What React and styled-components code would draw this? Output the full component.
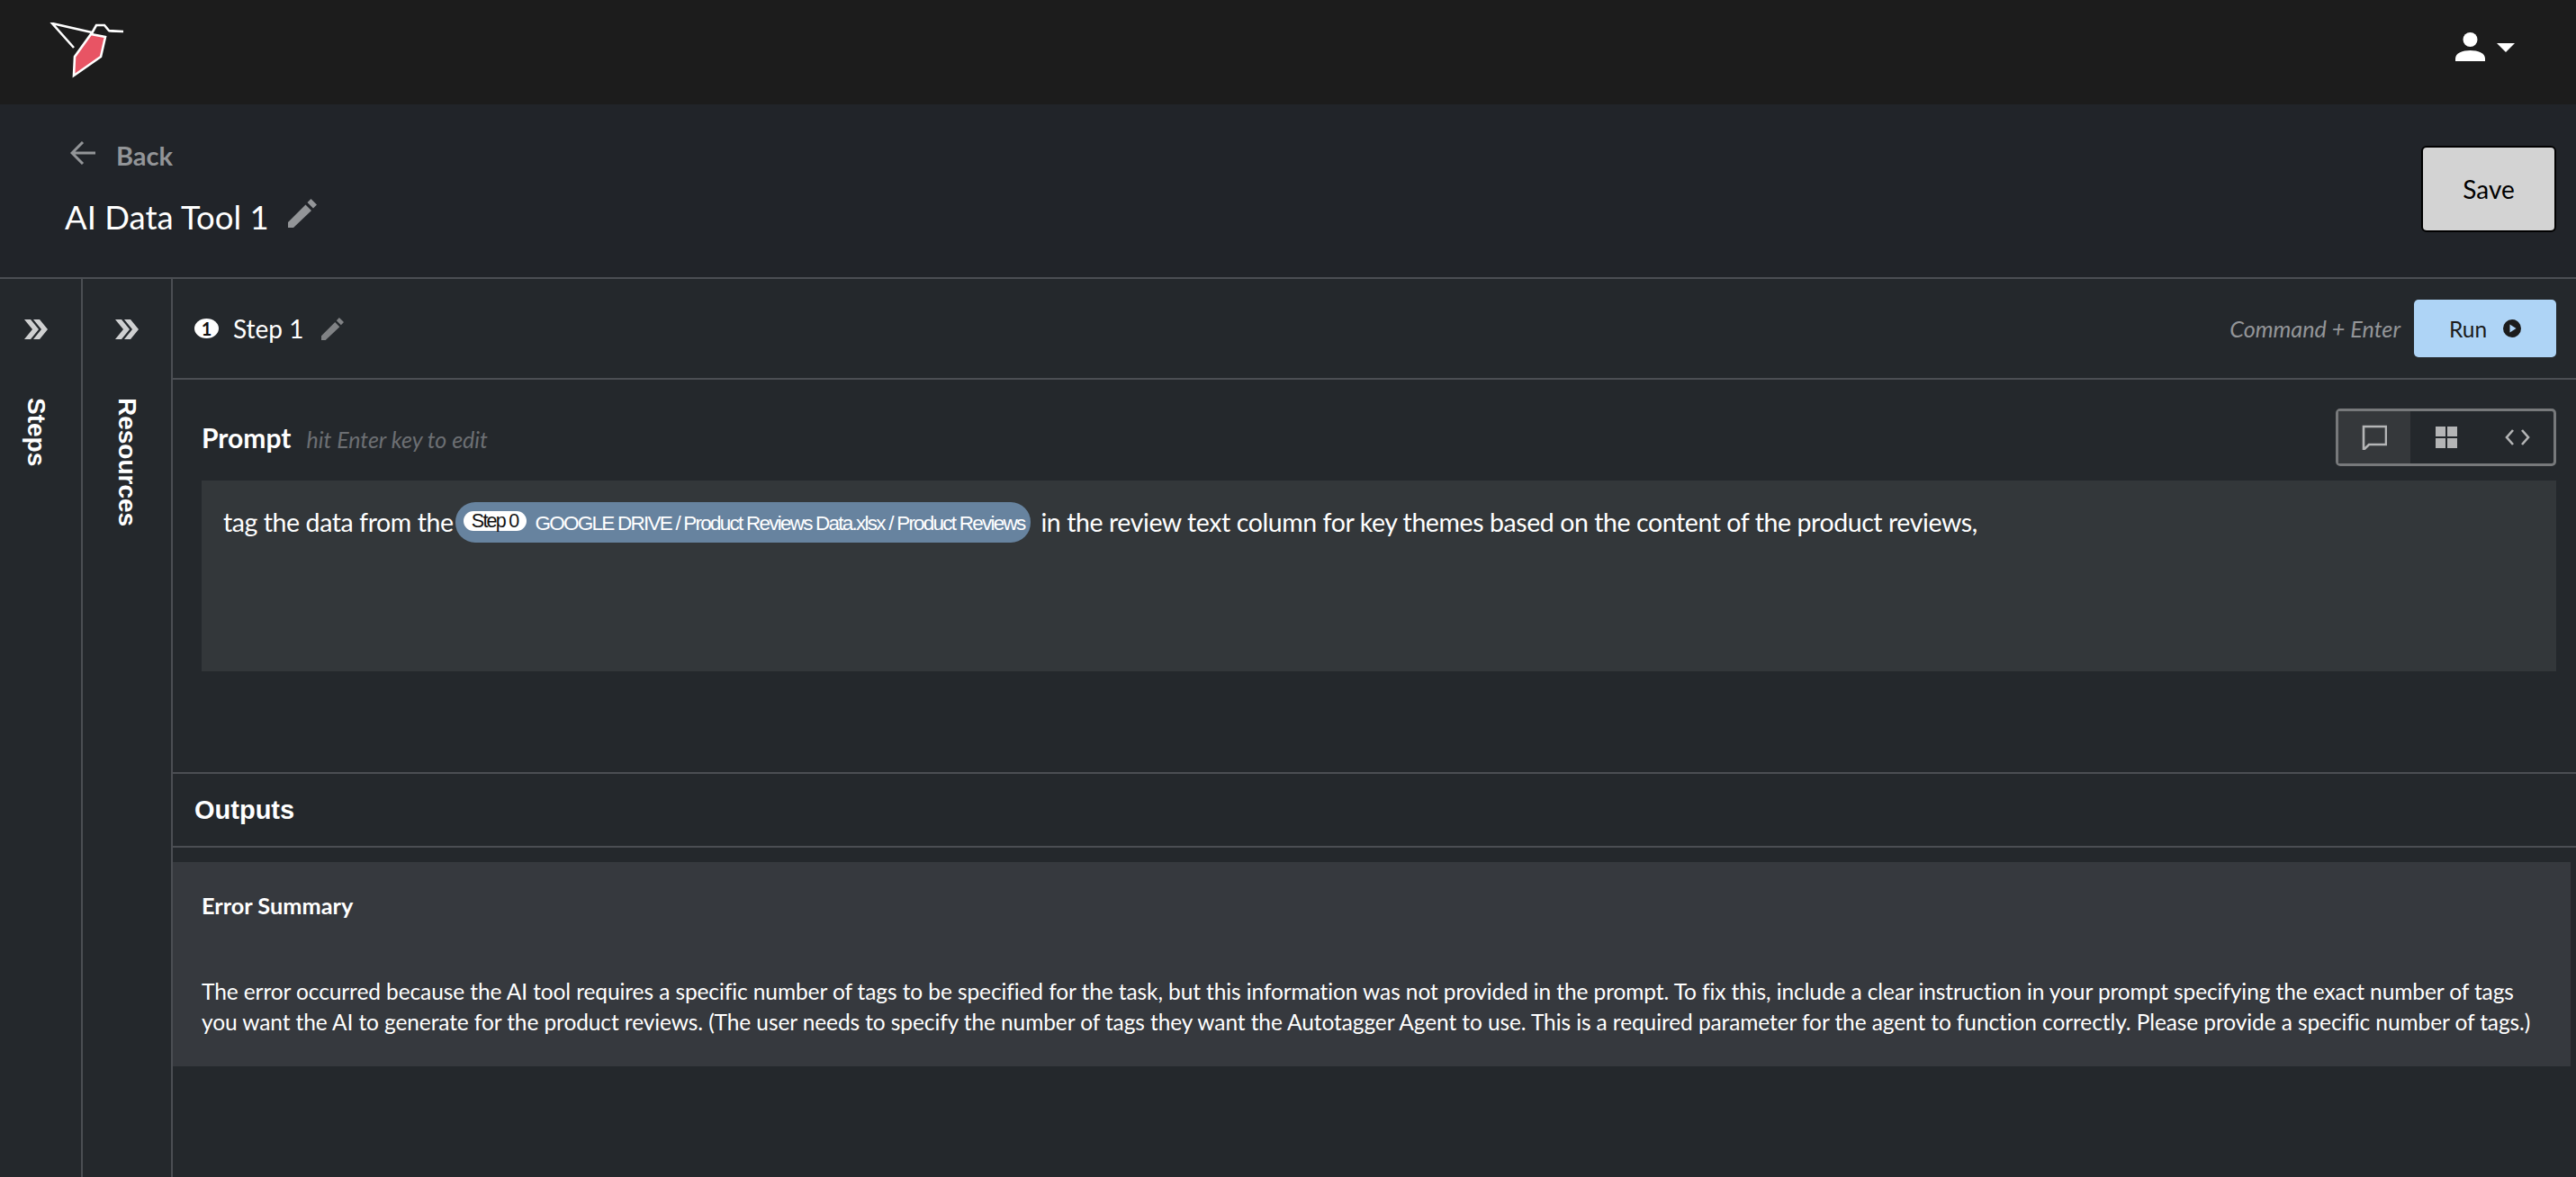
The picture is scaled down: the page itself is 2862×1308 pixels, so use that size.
import React from "react";
import styled, { createGlobalStyle } from "styled-components";

const Global = createGlobalStyle`
  html, body { margin: 0; padding: 0; background: #24282c; }
  body { font-family: Lato, "Liberation Sans", sans-serif; color: #fff; }
  * { box-sizing: border-box; }
`;
const Page = styled.div`width: 2862px; height: 1308px; overflow: hidden; display: flex; flex-direction: column;`;
const TopBar = styled.header`height: 116px; flex: none; background: #1c1c1c; display: flex; align-items: flex-start; justify-content: space-between; padding: 25px 68px 0 55px;`;
const UserMenu = styled.div`display: flex; align-items: center; gap: 13px; margin-top: 11px;`;
const Caret = styled.span`width: 0; height: 0; border-left: 10px solid transparent; border-right: 10px solid transparent; border-top: 10px solid #fff; margin-top: 2px;`;
const TitleBar = styled.section`height: 194px; flex: none; background: #212429; border-bottom: 2px solid #4b4e53; display: flex; justify-content: space-between; padding: 33px 22px 0 72px;`;
const TitleCol = styled.div`display: flex; flex-direction: column;`;
const BackLink = styled.div`display: flex; align-items: center; gap: 23px; color: #939598; font-size: 29px; font-weight: 700; height: 46px; padding-left: 6px;`;
const BackArrow = styled.svg`margin-top: -4px;`;
const TitleRow = styled.div`display: flex; align-items: center; gap: 21px; font-size: 36.5px; margin-top: 24px; height: 44px;`;
const TitlePencil = styled.span`display: flex; margin-top: -8px;`;
const SaveButton = styled.button`width: 150px; height: 96px; margin-top: 13px; border: 2px solid #000; border-radius: 6px; background: #d3d3d3; color: #000; font: 400 28px Lato, sans-serif;`;
const Body = styled.div`flex: 1; display: flex; min-height: 0;`;
const SideCol = styled.aside`flex: none; width: ${p => p.$w}px; border-right: 2px solid #4b4e53; display: flex; flex-direction: column; align-items: center; padding: 45px ${p => p.$shift}px 0 0;`;
const SideLabel = styled.div`writing-mode: vertical-rl; font: 700 28px "Liberation Sans", sans-serif; margin-top: 65px; color: #fff;`;
const Main = styled.main`flex: 1; min-width: 0; display: flex; flex-direction: column;`;
const StepBar = styled.div`height: 112px; flex: none; border-bottom: 2px solid #4b4e53; display: flex; align-items: center; justify-content: space-between; padding: 0 22px 0 24px;`;
const StepLeft = styled.div`display: flex; align-items: center; gap: 20px; font-size: 28px;`;
const StepName = styled.div`display: flex; align-items: center; gap: 16px;`;
const NumDot = styled.span`width: 27px; height: 22px; border-radius: 50%; background: #fff; color: #111; font-size: 20px; font-weight: 700; display: flex; align-items: center; justify-content: center;`;
const StepRight = styled.div`display: flex; align-items: center; gap: 15px;`;
const Hint = styled.span`font-style: italic; color: ${p => p.$c}; font-size: ${p => p.$s}px; font-weight: 400;`;
const RunButton = styled.button`width: 158px; height: 64px; border: 0; border-radius: 5px; background: #aed4f6; color: #1c1c1c; font: 400 24.5px Lato, sans-serif; display: flex; align-items: center; justify-content: center; gap: 18px;`;
const PromptSection = styled.section`height: 438px; flex: none; border-bottom: 2px solid #4b4e53; padding: 32px 22px 0 32px;`;
const PromptHead = styled.div`height: 80px; display: flex; align-items: flex-start; justify-content: space-between;`;
const PromptTitle = styled.div`display: flex; align-items: baseline; gap: 17px; margin-top: 14px; font-size: 30px; font-weight: 700;`;
const Toggle = styled.div`width: 245px; height: 64px; border: 3px solid #77797b; border-radius: 5px; display: flex;`;
const ToggleItem = styled.div`flex: 1; display: flex; align-items: center; justify-content: center; background: ${p => p.$on ? "#35383b" : "transparent"};`;
const PromptBox = styled.div`height: 212px; background: #33373a; padding: 22px 24px; font-size: 28.5px; letter-spacing: -0.42px; display: flex; align-items: flex-start;`;
const PromptText = styled.span`line-height: 48px; white-space: nowrap;`;
const Chip = styled.span`height: 45px; margin: 2px 11px 0 2px; padding: 0 7px 0 9px; border-radius: 22px; background: #67839f; display: inline-flex; align-items: center; gap: 10px; font: 400 22.5px "Liberation Sans", sans-serif; letter-spacing: -1.77px; white-space: nowrap;`;
const ChipTag = styled.span`height: 22px; width: 70px; justify-content: center; border-radius: 11px; background: #fff; color: #111; font-size: 21.5px; line-height: 22px; margin-top: -3px; display: flex; align-items: center;`;
const ChipLabel = styled.span`margin-top: 3px;`;
const OutputsHead = styled.div`height: 82px; flex: none; border-bottom: 2px solid #4b4e53; display: flex; align-items: center; padding-left: 24px; font: 700 29px "Liberation Sans", sans-serif;`;
const ErrorCard = styled.section`margin: 16px 6px 0 0; height: 227px; background: #36393e; padding: 32px 32px; font-size: 24.5px;`;
const ErrorTitle = styled.div`font-weight: 700; font-size: 25.3px; line-height: 32px;`;
const ErrorText = styled.p`margin: 63px 0 0; line-height: 34px; white-space: pre; letter-spacing: -0.1px;`;

const Pencil = ({ size, color }) => (
  <svg width={size} height={size} viewBox="0 0 32 32" fill={color}><path d="M0 32v-6L19.500 6.500 26 13 6 32zM21.500 4 25.500 0 32 6.500 28 10.500z" /></svg>
);
const Chevrons = () => (
  <svg width="26" height="22" viewBox="0 0 26 22" fill="#cfd0d1"><path d="M0 0h7l9 11-9 11H0l9-11zM10 0h7l9 11-9 11h-7l9-11z" /></svg>
);
const Logo = () => (
  <svg width="84" height="62" viewBox="0 0 84 62">
    <path d="M27 28 3 1l44 10" fill="none" stroke="#fff" strokeWidth="2.6" />
    <path d="M47 12 52 3h9l5 6 16 1-16-.500" fill="none" stroke="#fff" strokeWidth="2.6" />
    <path d="M27 59 28 38 46 13 62 16 57 38z" fill="#e85464" stroke="#fff" strokeWidth="2.6" />
  </svg>
);

export default function App() {
  return (
    <Page>
      <Global />
      <TopBar>
        <Logo />
        <UserMenu>
          <svg width="33" height="32" viewBox="0 0 33 32" fill="#fff"><circle cx="16.500" cy="8" r="8" /><path d="M0 32v-3c0-6 8-9 16.500-9S33 23 33 29v3z" /></svg>
          <Caret />
        </UserMenu>
      </TopBar>
      <TitleBar>
        <TitleCol>
          <BackLink>
            <BackArrow width="28" height="26" viewBox="0 0 28 26" fill="none" stroke="#939598" strokeWidth="3"><path d="M14 1 2 13l12 12M2 13h26" /></BackArrow>
            Back
          </BackLink>
          <TitleRow>AI Data Tool 1 <TitlePencil><Pencil size="32" color="#939598" /></TitlePencil></TitleRow>
        </TitleCol>
        <SaveButton>Save</SaveButton>
      </TitleBar>
      <Body>
        <SideCol $w={92} $shift={11}><Chevrons /><SideLabel>Steps</SideLabel></SideCol>
        <SideCol $w={100} $shift={0}><Chevrons /><SideLabel>Resources</SideLabel></SideCol>
        <Main>
          <StepBar>
            <StepLeft>
              <StepName><NumDot>1</NumDot>Step 1</StepName>
              <Pencil size="25" color="#808285" />
            </StepLeft>
            <StepRight>
              <Hint $c="#939598" $s={25.2}>Command + Enter</Hint>
              <RunButton>Run
                <svg width="20" height="20" viewBox="0 0 20 20"><circle cx="10" cy="10" r="10" fill="#1c1c1c" /><path d="M7.500 5.500 14.500 10l-7 4.500z" fill="#aed4f6" /></svg>
              </RunButton>
            </StepRight>
          </StepBar>
          <PromptSection>
            <PromptHead>
              <PromptTitle>Prompt <Hint $c="#6c6f73" $s={25}>hit Enter key to edit</Hint></PromptTitle>
              <Toggle>
                <ToggleItem $on><svg width="28" height="28" viewBox="0 0 28 28" fill="none" stroke="#b4b5b6" strokeWidth="2.6"><path d="M2 2h25v20H8l-6 6z" /></svg></ToggleItem>
                <ToggleItem><svg width="24" height="24" viewBox="0 0 24 24" fill="#b4b5b6"><path d="M0 0h11v11H0zM13 0h11v11H13zM0 13h11v11H0zM13 13h11v11H13z" /></svg></ToggleItem>
                <ToggleItem><svg width="28" height="18" viewBox="0 0 28 18" fill="none" stroke="#b4b5b6" strokeWidth="2.6"><path d="M9 1 2 9l7 8M19 1l7 8-7 8" /></svg></ToggleItem>
              </Toggle>
            </PromptHead>
            <PromptBox>
              <PromptText>tag the data from the</PromptText>
              <Chip><ChipTag>Step 0</ChipTag><ChipLabel>GOOGLE DRIVE / Product Reviews Data.xlsx / Product Reviews</ChipLabel></Chip>
              <PromptText>in the review text column for key themes based on the content of the product reviews,</PromptText>
            </PromptBox>
          </PromptSection>
          <OutputsHead>Outputs</OutputsHead>
          <ErrorCard>
            <ErrorTitle>Error Summary</ErrorTitle>
            <ErrorText>{"The error occurred because the AI tool requires a specific number of tags to be specified for the task, but this information was not provided in the prompt. To fix this, include a clear instruction in your prompt specifying the exact number of tags\nyou want the AI to generate for the product reviews. (The user needs to specify the number of tags they want the Autotagger Agent to use. This is a required parameter for the agent to function correctly. Please provide a specific number of tags.)"}</ErrorText>
          </ErrorCard>
        </Main>
      </Body>
    </Page>
  );
}
